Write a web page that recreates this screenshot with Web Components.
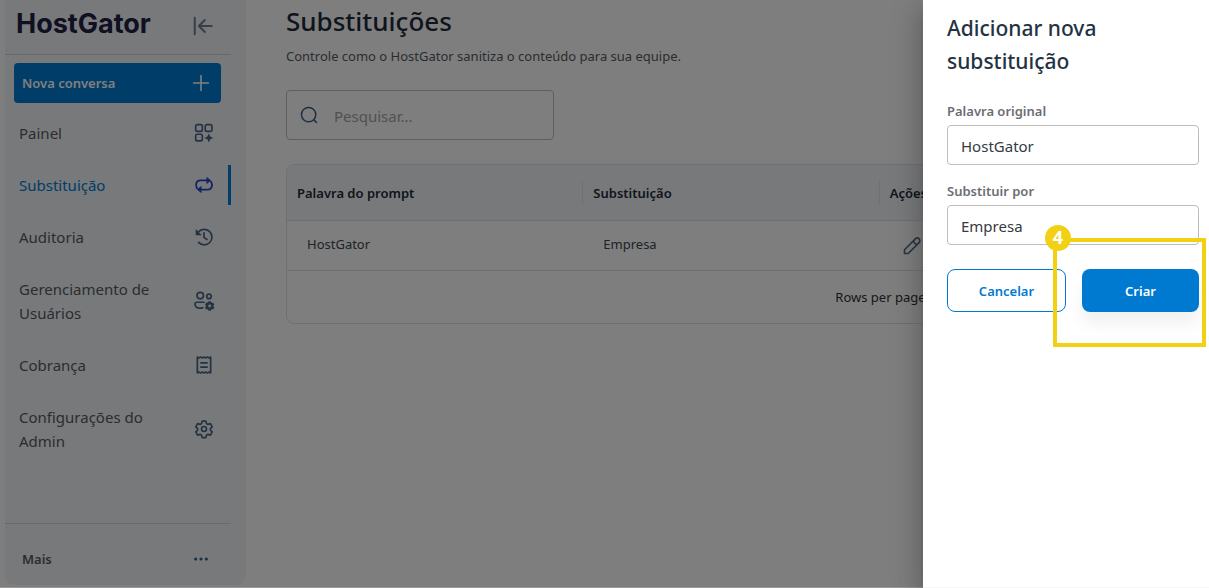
<!DOCTYPE html>
<html lang="pt-BR">
<head>
<meta charset="utf-8">
<meta name="viewport" content="width=device-width, initial-scale=1">
<title>Substituições</title>
<style>
html, body { margin: 0; height: 100%; }
body { font-family: "Noto Sans", "Open Sans", sans-serif; font-size: 15px; color: #555b61; background: #fff; overflow: hidden; }
</style>
</head>
<body>
<app-shell></app-shell>

<template id="t-app-shell">
<style>
:host { display: flex; min-height: 100vh; position: relative; overflow: hidden; box-sizing: border-box; background: #fdfdfd; }
side-bar { flex: 0 0 241px; margin-left: 5px; margin-bottom: 3px; }
replacements-page { flex: 1; min-width: 0; padding: 3px 32px 0 40px; }
.backdrop { position: absolute; inset: 0; background: rgba(0,0,0,.5); background-clip: padding-box; border-bottom: 1px solid #999; }
side-drawer { position: absolute; top: 0; right: 0; bottom: 0; width: 286px; }
</style>
<side-bar></side-bar>
<replacements-page></replacements-page>
<div class="backdrop"></div>
<side-drawer></side-drawer>
</template>

<template id="t-side-bar">
<style>
:host { display: flex; flex-direction: column; box-sizing: border-box; background: #eff3f7; border-radius: 0 0 10px 10px; padding-right: 15px; }
header { display: flex; align-items: center; justify-content: space-between; height: 55px; box-sizing: border-box; padding: 0 17px 6px 11px; border-bottom: 1px solid #d0d4d9; }
.brand { font: 700 27px/32px Inter, sans-serif; color: #1f2044; text-decoration: none; }
.icon { border: 0; background: none; padding: 0; display: flex; margin-top: 4px; }
.new { display: flex; align-items: center; justify-content: space-between; height: 40px; margin: 8px 10px 4px 9px; padding: 0 10px 0 8px; border: 0; border-radius: 4px; background: #007ad1; color: #fff; font: 600 13px/20px "Noto Sans", sans-serif; }
nav { display: flex; flex-direction: column; }
footer { margin-top: auto; border-top: 1px solid #d0d4d9; height: 62px; padding: 8px 20px 0 17px; box-sizing: border-box; display: flex; align-items: center; justify-content: space-between; font-size: 13px; font-weight: 600; color: #555b61; }
footer ui-icon { margin-right: 2px; }
</style>
<header><a class="brand" href="#">HostGator</a><button class="icon" aria-label="Recolher menu"><ui-icon name="collapse" size="22"></ui-icon></button></header>
<button class="new"><span>Nova conversa</span><ui-icon name="plus" size="20"></ui-icon></button>
<nav>
<nav-item icon="grid">Painel</nav-item>
<nav-item icon="repeat" active>Substituição</nav-item>
<nav-item icon="history">Auditoria</nav-item>
<nav-item icon="users">Gerenciamento de Usuários</nav-item>
<nav-item icon="receipt">Cobrança</nav-item>
<nav-item icon="gear">Configurações do Admin</nav-item>
</nav>
<footer><span>Mais</span><ui-icon name="dots" size="16"></ui-icon></footer>
</template>

<template id="t-nav-item">
<style>
:host { display: block; padding: 6px 0; }
a { display: flex; align-items: center; justify-content: space-between; padding: 8px 14px; border-right: 3px solid transparent; color: #555b61; line-height: 24px; text-decoration: none; }
span { max-width: 140px; }
ui-icon { color: #4b6583; margin: 0 0 0 8px; }
:host([active]) a { color: #007ad1; border-right-color: #007ad1; }
:host([active]) ui-icon { color: #2747c7; }
</style>
<a href="#"><span><slot></slot></span><ui-icon size="20"></ui-icon></a>
</template>

<template id="t-replacements-page">
<style>
:host { display: block; box-sizing: border-box; }
h1 { margin: 0; font-size: 26px; line-height: 36px; font-weight: 500; color: #1e2a38; }
p { margin: 7px 0 24px; font-size: 13px; line-height: 20px; }
.search { display: flex; align-items: center; gap: 16px; width: 268px; height: 50px; box-sizing: border-box; border: 1px solid #bcbfc3; border-radius: 4px; padding: 0 13px; color: #3f5f86; }
input { flex: 1; min-width: 0; border: 0; outline: 0; padding: 2px 0 0; background: none; font: inherit; font-size: 15px; }
input::placeholder { color: #a3a3a3; opacity: 1; }
data-table { margin-top: 24px; }
</style>
<h1>Substituições</h1>
<p>Controle como o HostGator sanitiza o conteúdo para sua equipe.</p>
<label class="search"><ui-icon name="search" size="18"></ui-icon><input type="search" placeholder="Pesquisar..." aria-label="Pesquisar"></label>
<data-table></data-table>
</template>

<template id="t-data-table">
<style>
:host { display: block; border: 1px solid #e0e0e0; border-radius: 8px; overflow: hidden; font-size: 13px; line-height: 20px; color: #3d4751; }
table { width: 100%; table-layout: fixed; border-collapse: separate; border-spacing: 0; }
th { height: 55px; padding: 0; background: #eff3f7; border-bottom: 1px solid #e0e0e0; text-align: left; font-weight: 600; color: #1f2a37; }
th span { display: block; padding: 2px 10px; border-right: 1px solid #dce0e5; }
th:last-child span { border: 0; }
td { height: 45px; padding: 0 20px 4px; border-bottom: 1px solid #e0e0e0; }
td button { display: flex; border: 0; padding: 4px 0 0 2px; background: none; color: #5a6d82; }
footer { display: flex; justify-content: flex-end; align-items: center; gap: 20px; height: 52px; padding-right: 247px; color: #303030; }
</style>
<table>
<thead><tr><th><span>Palavra do prompt</span></th><th><span>Substituição</span></th><th><span>Ações</span></th></tr></thead>
<tbody><tr><td>HostGator</td><td>Empresa</td><td><button aria-label="Editar"><ui-icon name="pencil" size="20"></ui-icon></button></td></tr></tbody>
</table>
<footer><span>Rows per page:</span></footer>
</template>

<template id="t-side-drawer">
<style>
:host { display: block; box-sizing: border-box; padding: 12px 10px 24px 24px; background: #fff; border-bottom: 1px solid #f5f5f5; box-shadow: 0 8px 10px -5px rgba(0,0,0,.2), 0 16px 24px 2px rgba(0,0,0,.14), 0 6px 30px 5px rgba(0,0,0,.12); }
h2 { margin: 0 0 23px; font-size: 21px; line-height: 33px; font-weight: 500; color: #243342; }
form { display: flex; flex-direction: column; gap: 16px; }
.actions { display: flex; gap: 16px; margin-top: 8px; }
.primary { position: relative; flex: 1; display: flex; }
button { flex: 1; height: 43px; padding: 0; border: 1px solid #007ad1; border-radius: 8px; background: #fff; color: #007ad1; font: 600 13px/20px "Noto Sans", sans-serif; }
.primary button { border: 0; background: #007ad1; color: #fff; box-shadow: 0 12px 16px rgba(0,0,0,.06); }
step-marker { position: absolute; top: -31px; left: -29px; right: -7px; bottom: -35px; pointer-events: none; }
</style>
<h2>Adicionar nova substituição</h2>
<form>
<text-field label="Palavra original" value="HostGator"></text-field>
<text-field label="Substituir por" value="Empresa"></text-field>
<div class="actions"><button type="button">Cancelar</button><div class="primary"><button type="button">Criar</button><step-marker>4</step-marker></div></div>
</form>
</template>

<template id="t-text-field">
<style>
:host { display: block; }
label { display: block; margin-bottom: 4px; font-size: 13px; line-height: 20px; font-weight: 600; color: #696e74; }
input { display: block; width: 100%; height: 40px; box-sizing: border-box; border: 1px solid #bdbdbd; border-radius: 4px; padding: 2px 13px 0; font: inherit; font-size: 15px; color: #353b43; background: #fff; }
</style>
<label for="field"></label><input id="field" type="text">
</template>

<template id="t-step-marker">
<style>
:host { display: block; border: 4px solid #f2d114; box-sizing: border-box; }
span { position: absolute; left: -12px; top: -17px; width: 26px; height: 26px; border-radius: 50%; background: #f2d114; color: #fff; font: 700 18px/24px "Noto Sans", sans-serif; text-align: center; }
</style>
<span><slot></slot></span>
</template>

<script>
const icons = {
  collapse: '<path d="M3 3v18M21.500 12H8.500M14 5.500 7.500 12l6.500 6.500" stroke="#6f8091" stroke-width="2.200"/>',
  plus: '<path d="M12 3v18M3 12h18" stroke-width="1.900"/>',
  grid: '<rect x="2" y="2" width="8" height="8" rx="2"/><rect x="13.500" y="2" width="8" height="8" rx="2"/><rect x="2" y="13.500" width="8" height="8" rx="2"/><path d="M17.800 12.500l1.700 3.700 3.700 1.700-3.700 1.700-1.700 3.700-1.700-3.700-3.700-1.700 3.700-1.700z" fill="currentColor" stroke="none"/>',
  repeat: '<path d="M3.500 16C1 11 3 6.500 7.500 6.500H18M20.500 8C23 13 21 17.500 16.500 17.500H6" stroke-width="2.200"/><path d="M15 2l5.500 4.500-5.500 4.500zM9 13l-5.500 4.500L9 22z" fill="currentColor" stroke="none"/>',
  history: '<path d="M5.200 6A9.300 9.300 0 1 1 5.500 18.500M12 7v5.500l3.500 2.500"/><path d="M2 2.500v7.500h7.500z" fill="currentColor" stroke="none"/>',
  users: '<circle cx="7.500" cy="5.500" r="3.900"/><circle cx="18" cy="6.500" r="2.700"/><path d="M12 13.500H3c-1.500 0-1.800 1-1.800 2 0 3.500 2.800 5 6.300 5 1 0 2 0 3-.5"/><circle cx="18.800" cy="18" r="3.200" stroke-width="3"/><path d="M18.800 12.300v2M18.800 21.700v2M13.900 15.100l1.800 1M21.900 19.900l1.800 1M13.900 20.900l1.800-1M21.900 16.100l1.800-1" stroke-width="3" stroke-linecap="butt"/>',
  receipt: '<path d="M4 2.500l2 1 2-1 2 1 2-1 2 1 2-1 2 1 2-1v19l-2-1-2 1-2-1-2 1-2-1-2 1-2-1-2 1zM7.500 9.500h9M7.500 14.500h9" stroke-linecap="butt"/>',
  gear: '<circle cx="12" cy="12" r="3"/><path d="M9.800 2.500h4.400l.7 3 1.800 1 3-.9 2.200 3.800-2.300 2.100v1.900l2.300 2.100-2.200 3.800-3-.9-1.800 1-.7 3H9.800l-.7-3-1.800-1-3 .9-2.200-3.800 2.300-2.100v-1.900L2.100 9.400l2.200-3.800 3 .9 1.800-1z"/>',
  dots: '<g fill="#3f5f86" stroke="none"><circle cx="4" cy="12" r="2.400"/><circle cx="12" cy="12" r="2.400"/><circle cx="20" cy="12" r="2.400"/></g>',
  search: '<circle cx="11.500" cy="11.500" r="9.500"/><path d="M18.500 18.500l3.500 3.500"/>',
  pencil: '<path d="M3 21v-4.500L16 3.500a3 3 0 0 1 4.500 4.500L7.500 21zM14 5.500a4.500 4.500 0 0 0 4.500 4.500"/>'
};

class Base extends HTMLElement {
  constructor() {
    super();
    const t = document.getElementById('t-' + this.localName);
    this.attachShadow({ mode: 'open' });
    if (t) this.shadowRoot.append(t.content.cloneNode(true));
  }
}
class UiIcon extends Base {
  static observedAttributes = ['name', 'size'];
  attributeChangedCallback() {
    const s = this.getAttribute('size') || 20;
    this.shadowRoot.innerHTML = `<style>:host{display:block;flex:none}svg{display:block;overflow:visible}</style><svg aria-hidden="true" width="${s}" height="${s}" viewBox="0 0 24 24" fill="none" stroke="currentColor" stroke-width="2" stroke-linecap="round" stroke-linejoin="round">${icons[this.getAttribute('name')] || ''}</svg>`;
  }
}
class NavItem extends Base {
  connectedCallback() { this.shadowRoot.querySelector('ui-icon').setAttribute('name', this.getAttribute('icon')); }
}
class TextField extends Base {
  connectedCallback() {
    this.shadowRoot.querySelector('label').textContent = this.getAttribute('label');
    this.shadowRoot.querySelector('input').value = this.getAttribute('value');
  }
}
customElements.define('ui-icon', UiIcon);
customElements.define('nav-item', NavItem);
customElements.define('text-field', TextField);
for (const n of ['step-marker', 'side-drawer', 'data-table', 'replacements-page', 'side-bar', 'app-shell'])
  customElements.define(n, class extends Base {});
</script>
</body>
</html>
